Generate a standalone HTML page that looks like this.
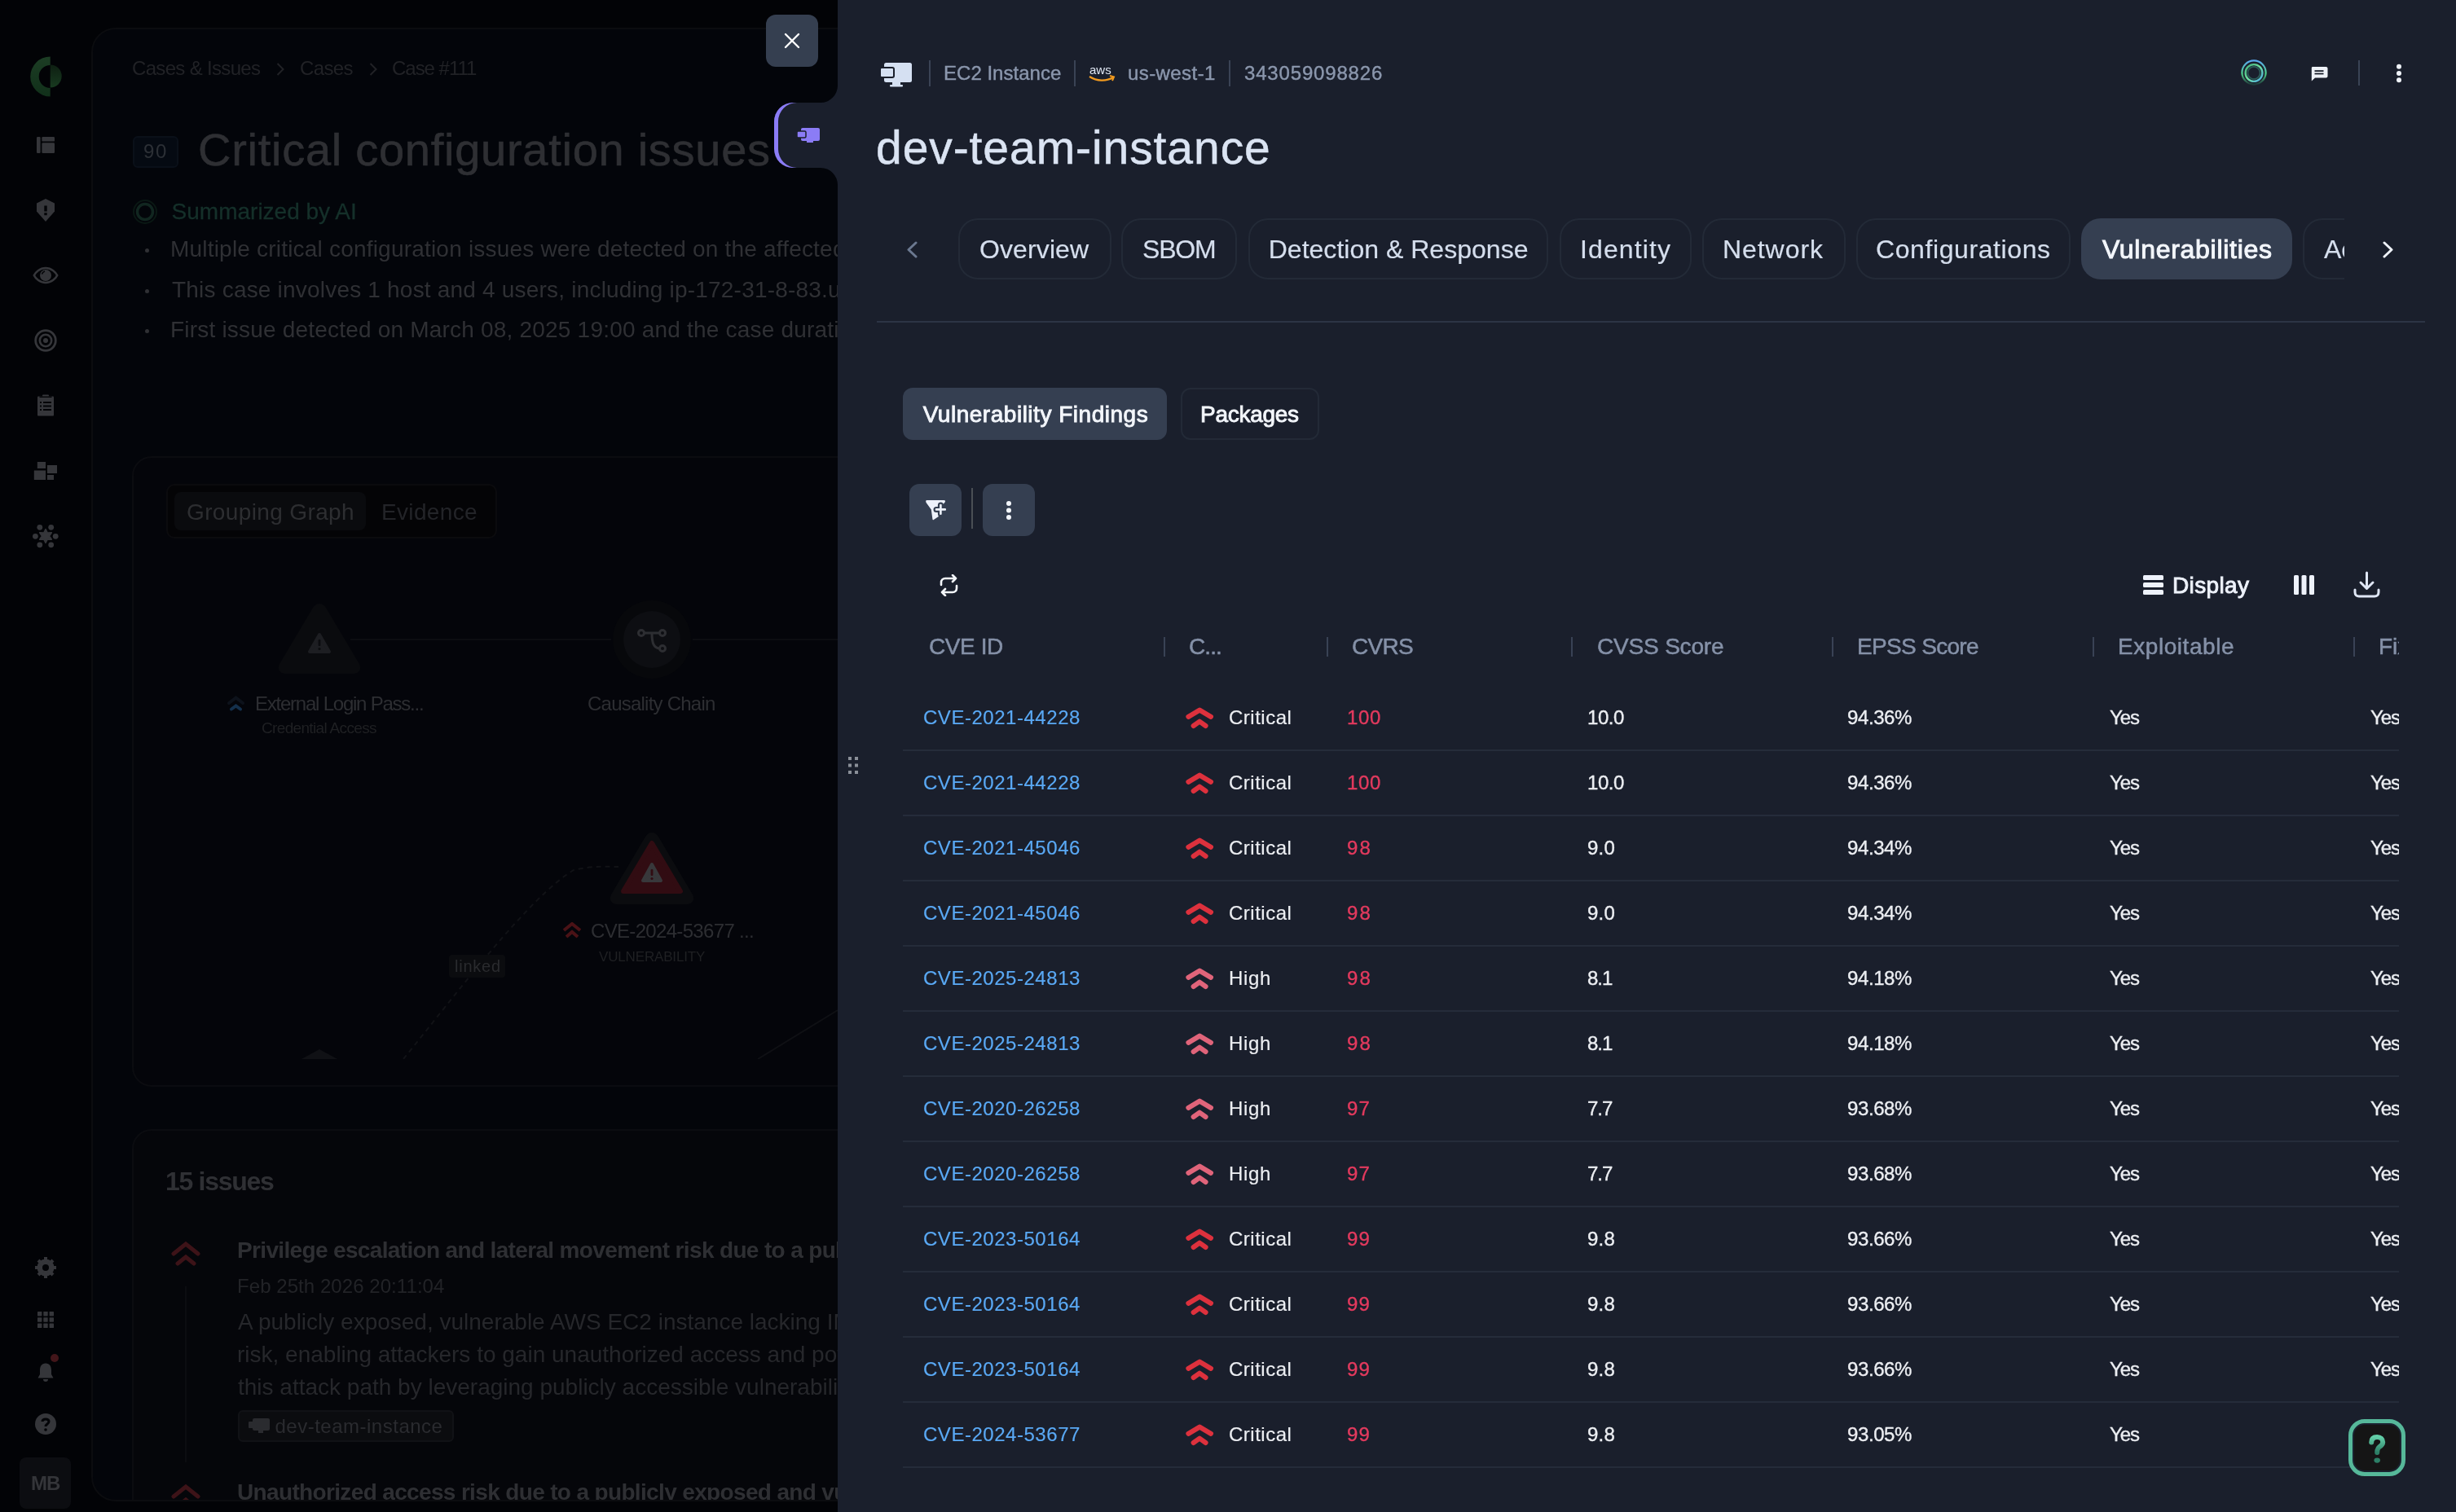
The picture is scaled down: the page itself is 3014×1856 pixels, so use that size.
<!DOCTYPE html><html><head><meta charset="utf-8"><style>
html,body{margin:0;padding:0;}
body{width:3014px;height:1856px;overflow:hidden;position:relative;background:#020306;font-family:"Liberation Sans",sans-serif;}
.a{position:absolute;}
.t{position:absolute;line-height:1;white-space:nowrap;}
#root{position:absolute;left:0;top:0;width:3014px;height:1856px;overflow:hidden;will-change:transform;}
</style></head><body><div id="root">
<div class="a" style="left:112px;top:34px;width:1100px;height:1809px;background:#03050a;border:2px solid #0b0c0f;border-radius:30px;box-sizing:border-box;"></div>
<svg class="a" style="left:30px;top:64px" width="60" height="60" viewBox="0 0 60 60"><defs><linearGradient id="lg1" x1="0" y1="0" x2="0" y2="1"><stop offset="0" stop-color="#1c3d24"/><stop offset="1" stop-color="#11301a"/></linearGradient><linearGradient id="lg2" x1="0" y1="0" x2="0" y2="1"><stop offset="0" stop-color="#0e1f12"/><stop offset="1" stop-color="#183a20"/></linearGradient></defs><path d="M31.7 5.5 A24.5 24.5 0 0 0 31.7 54.5 V44 A14 14 0 0 1 31.7 16 Z" fill="url(#lg1)"/><path d="M31.7 15.5 A14 14 0 0 1 31.7 43.5 Z" fill="url(#lg2)"/></svg>
<svg class="a" style="left:44px;top:167px;" width="24" height="22" viewBox="0 0 24 22"><rect x="1" y="1" width="4.6" height="20" rx="1.2" fill="#35363a"/><rect x="7.4" y="1" width="15.6" height="5.6" rx="1.2" fill="#35363a"/><rect x="7.4" y="8.2" width="15.6" height="12.8" rx="1.2" fill="#35363a"/></svg>
<svg class="a" style="left:44px;top:243px;" width="24" height="30" viewBox="0 0 24 30"><path d="M12 1 L23 6.5 V16.5 L12 29 L1 16.5 V6.5 Z" fill="#35363a"/><rect x="10.3" y="9.5" width="3.4" height="7" fill="#030407"/><rect x="10.3" y="18.2" width="3.4" height="3" fill="#030407"/></svg>
<svg class="a" style="left:40px;top:327px;" width="32" height="22" viewBox="0 0 32 22"><path d="M16 2 C8.5 2 3.5 7.5 1.8 11 C3.5 14.5 8.5 20 16 20 C23.5 20 28.5 14.5 30.2 11 C28.5 7.5 23.5 2 16 2 Z" fill="none" stroke="#35363a" stroke-width="2.6"/><circle cx="16" cy="11" r="7" fill="#35363a"/><path d="M11.5 9.5 A5 5 0 0 1 15 6" fill="none" stroke="#030407" stroke-width="1.6"/></svg>
<svg class="a" style="left:42px;top:404px;" width="28" height="28" viewBox="0 0 28 28"><circle cx="14" cy="14" r="12.3" fill="none" stroke="#35363a" stroke-width="2.8"/><circle cx="14" cy="14" r="7.2" fill="none" stroke="#35363a" stroke-width="2.6"/><circle cx="14" cy="14" r="3" fill="#35363a"/></svg>
<svg class="a" style="left:45px;top:484px;" width="22" height="28" viewBox="0 0 22 28"><rect x="1" y="2.5" width="20" height="24" rx="1" fill="#35363a"/><rect x="7" y="0.5" width="8" height="2.5" rx="1" fill="#35363a"/><rect x="3.5" y="2.6" width="15" height="1.4" fill="#030407"/><g fill="#030407"><rect x="4" y="9" width="2" height="2"/><rect x="4" y="13.5" width="2" height="2"/><rect x="4" y="18" width="2" height="2"/><rect x="8" y="9" width="10" height="2"/><rect x="8" y="13.5" width="10" height="2"/><rect x="8" y="18" width="10" height="2"/></g></svg>
<svg class="a" style="left:41px;top:566px;" width="30" height="24" viewBox="0 0 30 24"><rect x="4.8" y="1" width="10.2" height="8" fill="#35363a"/><rect x="17" y="5" width="12" height="10" fill="#35363a"/><rect x="0.8" y="11.5" width="14.2" height="11.5" fill="#35363a"/><rect x="17" y="17" width="8" height="6" fill="#35363a"/></svg>
<svg class="a" style="left:40px;top:642px;" width="32" height="32" viewBox="0 0 32 32"><path d="M16.00 7.50 L18.25 12.10 L23.36 11.75 L20.50 16.00 L23.36 20.25 L18.25 19.90 L16.00 24.50 L13.75 19.90 L8.64 20.25 L11.50 16.00 L8.64 11.75 L13.75 12.10 Z" fill="#35363a" stroke="#35363a" stroke-width="1.5" stroke-linejoin="round"/><circle cx="8.8" cy="5.3" r="3.4" fill="#35363a"/><circle cx="22.7" cy="5.3" r="3.4" fill="#35363a"/><circle cx="3.4" cy="16.3" r="3.4" fill="#35363a"/><circle cx="28.2" cy="16.3" r="3.4" fill="#35363a"/><circle cx="8.8" cy="26.8" r="3.4" fill="#35363a"/><circle cx="22.7" cy="26.8" r="3.4" fill="#35363a"/></svg>
<svg class="a" style="left:43px;top:1543px;" width="26" height="26" viewBox="0 0 26 26"><circle cx="13" cy="13" r="8" fill="none" stroke="#35363a" stroke-width="5"/><g stroke="#35363a" stroke-width="4"><line x1="13" y1="0" x2="13" y2="26"/><line x1="0" y1="13" x2="26" y2="13"/><line x1="4" y1="4" x2="22" y2="22"/><line x1="22" y1="4" x2="4" y2="22"/></g><circle cx="13" cy="13" r="4" fill="#030407"/></svg>
<svg class="a" style="left:46px;top:1610px;" width="20" height="20" viewBox="0 0 20 20"><rect x="0.0" y="0.0" width="5.4" height="5.4" rx="0.6" fill="#35363a"/><rect x="0.0" y="7.3" width="5.4" height="5.4" rx="0.6" fill="#35363a"/><rect x="0.0" y="14.6" width="5.4" height="5.4" rx="0.6" fill="#35363a"/><rect x="7.3" y="0.0" width="5.4" height="5.4" rx="0.6" fill="#35363a"/><rect x="7.3" y="7.3" width="5.4" height="5.4" rx="0.6" fill="#35363a"/><rect x="7.3" y="14.6" width="5.4" height="5.4" rx="0.6" fill="#35363a"/><rect x="14.6" y="0.0" width="5.4" height="5.4" rx="0.6" fill="#35363a"/><rect x="14.6" y="7.3" width="5.4" height="5.4" rx="0.6" fill="#35363a"/><rect x="14.6" y="14.6" width="5.4" height="5.4" rx="0.6" fill="#35363a"/></svg>
<svg class="a" style="left:45px;top:1672px;" width="22" height="25" viewBox="0 0 22 25"><path d="M11 1.5 C6 1.5 4 5.5 4 10 V15 L1.5 19.5 H20.5 L18 15 V10 C18 5.5 16 1.5 11 1.5 Z" fill="#35363a"/><path d="M8 21 H14 A3 3 0 0 1 8 21 Z" fill="#35363a"/></svg>
<svg class="a" style="left:61px;top:1661px;" width="12" height="12" viewBox="0 0 12 12"><circle cx="6" cy="6" r="5" fill="#43161a"/></svg>
<svg class="a" style="left:43px;top:1735px;" width="26" height="26" viewBox="0 0 26 26"><circle cx="13" cy="13" r="13" fill="#35363a"/><path d="M9 10 C9 6 17 6 17 10 C17 13 13 13 13 16" fill="none" stroke="#030407" stroke-width="3"/><circle cx="13" cy="20" r="1.8" fill="#030407"/></svg>
<div class="a" style="left:24px;top:1789px;width:63px;height:63px;background:#0c0d11;border-radius:8px;"></div>
<div class="t" style="left:38.0px;top:1808.7px;font-size:24px;color:#343539;font-weight:700;letter-spacing:-0.99px;">MB</div>
<div class="a" style="left:114px;top:36px;width:1096px;height:1805px;overflow:hidden;border-radius:28px;">
<div class="t" style="left:48.0px;top:36.2px;font-size:24px;color:#212226;font-weight:400;letter-spacing:-0.67px;">Cases &amp; Issues</div>
<svg class="a" style="left:224px;top:40px;" width="12" height="18" viewBox="0 0 12 18"><path d="M2.5 2 L9.5 9 L2.5 16" fill="none" stroke="#212226" stroke-width="2"/></svg>
<div class="t" style="left:254.0px;top:36.2px;font-size:24px;color:#212226;font-weight:400;letter-spacing:-0.63px;">Cases</div>
<svg class="a" style="left:338px;top:40px;" width="12" height="18" viewBox="0 0 12 18"><path d="M2.5 2 L9.5 9 L2.5 16" fill="none" stroke="#212226" stroke-width="2"/></svg>
<div class="t" style="left:367.0px;top:36.2px;font-size:24px;color:#212226;font-weight:400;letter-spacing:-1.02px;">Case #111</div>
<div class="a" style="left:49px;top:131px;width:56px;height:39px;background:#050a12;border:2px solid #0a1019;border-radius:6px;box-sizing:border-box;"></div>
<div class="t" style="left:62.0px;top:137.7px;font-size:24px;color:#2c3036;font-weight:400;letter-spacing:1.65px;">90</div>
<div class="t" style="left:129.0px;top:120.2px;font-size:56px;color:#2e2f33;font-weight:400;letter-spacing:0.73px;-webkit-text-stroke:0.6px #2e2f33;">Critical configuration issues</div>
<svg class="a" style="left:49px;top:209px;" width="30" height="30" viewBox="0 0 30 30"><circle cx="15" cy="15" r="14" fill="none" stroke="#0a1814" stroke-width="2"/><circle cx="15" cy="15" r="9.5" fill="none" stroke="#112620" stroke-width="3.5"/></svg>
<div class="t" style="left:96.6px;top:210.3px;font-size:28px;color:#15302a;font-weight:400;-webkit-text-stroke:0.3px #15302a;">Summarized by AI</div>
<div class="a" style="left:64px;top:269.0px;width:5px;height:5px;background:#2f3034;border-radius:50%;"></div>
<div class="t" style="left:95.0px;top:256.3px;font-size:28px;color:#2f3034;font-weight:400;letter-spacing:0.2px;">Multiple critical configuration issues were detected on the affected host</div>
<div class="a" style="left:64px;top:318.5px;width:5px;height:5px;background:#2f3034;border-radius:50%;"></div>
<div class="t" style="left:97.0px;top:305.8px;font-size:28px;color:#2f3034;font-weight:400;letter-spacing:0.2px;">This case involves 1 host and 4 users, including ip-172-31-8-83.us-west-1</div>
<div class="a" style="left:64px;top:368.0px;width:5px;height:5px;background:#2f3034;border-radius:50%;"></div>
<div class="t" style="left:95.0px;top:355.3px;font-size:28px;color:#2f3034;font-weight:400;letter-spacing:0.2px;">First issue detected on March 08, 2025 19:00 and the case duration</div>
<div class="a" style="left:48px;top:524px;width:900px;height:774px;background:#04050a;border:2px solid #0b0c10;border-radius:24px;box-sizing:border-box;"></div>
<div class="a" style="left:90px;top:558px;width:406px;height:67px;background:#040406;border:2px solid #0b0b0e;border-radius:10px;box-sizing:border-box;"></div>
<div class="a" style="left:100px;top:568px;width:235px;height:47px;background:#0a0b0e;border-radius:8px;"></div>
<div class="t" style="left:115.0px;top:579.3px;font-size:28px;color:#2d2e31;font-weight:400;letter-spacing:0.37px;">Grouping Graph</div>
<div class="t" style="left:354.0px;top:579.3px;font-size:28px;color:#232428;font-weight:400;letter-spacing:0.34px;">Evidence</div>
<div class="a" style="left:51px;top:644px;width:900px;height:620px;overflow:hidden;">
<svg class="a" style="left:-165px;top:-680px" width="1100" height="1856"><line x1="430" y1="785" x2="750" y2="785" stroke="#0c0d11" stroke-width="2"/><line x1="850" y1="785" x2="1028" y2="785" stroke="#0c0d11" stroke-width="2"/><path d="M495 1300 C560 1220 650 1100 704 1068 C730 1062 745 1064 759 1064" fill="none" stroke="#111216" stroke-width="2" stroke-dasharray="6 5"/><line x1="930" y1="1300" x2="1028" y2="1240" stroke="#0f1014" stroke-width="2"/><path d="M370 1300 L392 1288 L414 1300 Z" fill="#101115"/></svg>
<svg class="a" style="left:175px;top:58px;" width="104" height="90" viewBox="0 0 104 90"><path d="M52 3 C56 3 58 5 60 8 L101 77 C104 83 101 89 94 89 H10 C3 89 0 83 3 77 L44 8 C46 5 48 3 52 3 Z" fill="#0a0b0e"/><path d="M52 41 L64 62 H40 Z" fill="#1d1e22" stroke="#1d1e22" stroke-width="4" stroke-linejoin="round"/><rect x="50.6" y="47" width="2.8" height="8" rx="1" fill="#0b0c0f"/><circle cx="52" cy="58.5" r="1.6" fill="#0b0c0f"/></svg>
<svg class="a" style="left:113px;top:173px;" width="23" height="22" viewBox="0 0 23 22"><path d="M3 10 L11.5 3.5 L20 10" fill="none" stroke="#0d121b" stroke-width="4" stroke-linecap="round"/><path d="M6 17.5 L11.5 13.5 L17 17.5" fill="none" stroke="#14304c" stroke-width="4" stroke-linecap="round"/></svg>
<div class="t" style="left:148.0px;top:171.7px;font-size:24px;color:#2d2e32;font-weight:400;letter-spacing:-1.23px;">External Login Pass...</div>
<div class="t" style="left:156.0px;top:203.9px;font-size:19px;color:#1f2023;font-weight:400;letter-spacing:-0.66px;">Credential Access</div>
<svg class="a" style="left:587px;top:57px;" width="96" height="96" viewBox="0 0 96 96"><circle cx="48" cy="48" r="48" fill="#07080b"/><circle cx="48" cy="48" r="35" fill="#0d0e12"/><g fill="none" stroke="#2d2e32" stroke-width="3"><circle cx="35" cy="40" r="3.5"/><circle cx="61" cy="40" r="3.5"/><circle cx="61" cy="59" r="3.5"/><path d="M39 40 H57"/><path d="M48 40 C48 52 50 58 57 59"/></g></svg>
<div class="t" style="left:556.0px;top:171.7px;font-size:24px;color:#2d2e32;font-weight:400;letter-spacing:-0.77px;">Causality Chain</div>
<svg class="a" style="left:583px;top:340px;" width="104" height="92" viewBox="0 0 104 92"><path d="M52 2 C56 2 58 4 60 7 L102 78 C105 84 102 90 95 90 H9 C2 90 -1 84 2 78 L44 7 C46 4 48 2 52 2 Z" fill="#0b0c0f"/><path d="M52 15 L87 74 H17 Z" fill="#310c12" stroke="#310c12" stroke-width="6" stroke-linejoin="round"/><path d="M52 41 L63 61 H41 Z" fill="#38383b" stroke="#38383b" stroke-width="4" stroke-linejoin="round"/><rect x="50.6" y="47" width="2.8" height="8" rx="1" fill="#310c12"/><circle cx="52" cy="58.5" r="1.6" fill="#310c12"/></svg>
<svg class="a" style="left:525px;top:452px;" width="24" height="20" viewBox="0 0 24 20"><path d="M2 10 L12 2 L22 10" fill="none" stroke="#4a1216" stroke-width="4"/><path d="M5 18 L12 12 L19 18" fill="none" stroke="#4a1216" stroke-width="4"/></svg>
<div class="t" style="left:560.0px;top:450.7px;font-size:24px;color:#2d2e32;font-weight:400;letter-spacing:-0.67px;">CVE-2024-53677 ...</div>
<div class="t" style="left:570.0px;top:485.6px;font-size:17px;color:#1f2023;font-weight:400;letter-spacing:-0.16px;">VULNERABILITY</div>
<div class="a" style="left:386px;top:492px;width:69px;height:28px;background:#0b0c0f;border-radius:4px;"></div>
<div class="t" style="left:393.0px;top:496.1px;font-size:20px;color:#2a2b2e;font-weight:400;letter-spacing:0.77px;">linked</div>
</div>
<div class="a" style="left:48px;top:1350px;width:900px;height:600px;background:#05060a;border:2px solid #0b0c10;border-radius:24px;box-sizing:border-box;"></div>
<div class="t" style="left:89.0px;top:1398.4px;font-size:32px;color:#2f3034;font-weight:700;letter-spacing:-1.29px;">15 issues</div>
<svg class="a" style="left:96px;top:1488px;" width="36" height="30" viewBox="0 0 36 30"><path d="M3 15 L18 3 L33 15" fill="none" stroke="#3d1318" stroke-width="5" stroke-linecap="round"/><path d="M8 27 L18 19 L28 27" fill="none" stroke="#3d1318" stroke-width="5" stroke-linecap="round"/></svg>
<div class="a" style="left:113px;top:1543px;width:2px;height:216px;background:#0c0d11;"></div>
<div class="t" style="left:177.0px;top:1485.3px;font-size:28px;color:#2e2f33;font-weight:700;letter-spacing:-0.65px;">Privilege escalation and lateral movement risk due to a publicly exposed</div>
<div class="t" style="left:177.0px;top:1530.7px;font-size:24px;color:#222327;font-weight:400;letter-spacing:0.06px;">Feb 25th 2026 20:11:04</div>
<div class="t" style="left:178.0px;top:1573.3px;font-size:28px;color:#26272b;font-weight:400;">A publicly exposed, vulnerable AWS EC2 instance lacking IMDSv2 poses a</div>
<div class="t" style="left:177.0px;top:1613.3px;font-size:28px;color:#26272b;font-weight:400;">risk, enabling attackers to gain unauthorized access and potentially</div>
<div class="t" style="left:178.0px;top:1653.3px;font-size:28px;color:#26272b;font-weight:400;">this attack path by leveraging publicly accessible vulnerabilities</div>
<div class="a" style="left:178px;top:1695px;width:265px;height:39px;background:#0b0c0f;border:2px solid #111216;border-radius:6px;box-sizing:border-box;"></div>
<svg class="a" style="left:191px;top:1705px;" width="26" height="20" viewBox="0 0 26 20"><rect x="5" y="0" width="21" height="15" rx="2" fill="#2a2b2f"/><rect x="0" y="4" width="10" height="8" rx="1" fill="#2a2b2f"/><rect x="12" y="15" width="6" height="3" fill="#2a2b2f"/></svg>
<div class="t" style="left:223.5px;top:1702.7px;font-size:24px;color:#2a2b2f;font-weight:400;letter-spacing:0.50px;">dev-team-instance</div>
<svg class="a" style="left:96px;top:1786px;" width="36" height="30" viewBox="0 0 36 30"><path d="M3 15 L18 3 L33 15" fill="none" stroke="#3d1318" stroke-width="5" stroke-linecap="round"/><path d="M8 27 L18 19 L28 27" fill="none" stroke="#3d1318" stroke-width="5" stroke-linecap="round"/></svg>
<div class="t" style="left:177.0px;top:1782.3px;font-size:28px;color:#2e2f33;font-weight:700;letter-spacing:-0.65px;">Unauthorized access risk due to a publicly exposed and vulnerable</div>
</div>
<div class="a" style="left:940px;top:18px;width:64px;height:64px;background:#353f50;border-radius:12px;"></div>
<svg class="a" style="left:960px;top:38px;" width="24" height="24" viewBox="0 0 24 24"><path d="M4 4 L20 20 M20 4 L4 20" stroke="#ffffff" stroke-width="2.4" stroke-linecap="round"/></svg>
<div class="a" style="left:1028px;top:0px;width:1986px;height:1856px;background:#1a1f2c;"></div>
<div class="a" style="left:950px;top:126px;width:100px;height:80px;background:#1a1f2c;border-radius:23px 0 0 23px;box-shadow:inset 5px 0 0 #8b7cf6;"></div>
<svg class="a" style="left:1007px;top:105px" width="21" height="21"><path d="M21 0 V21 H0 A21 21 0 0 0 21 0 Z" fill="#1a1f2c"/></svg>
<svg class="a" style="left:1007px;top:206px" width="21" height="21"><path d="M21 21 V0 H0 A21 21 0 0 1 21 21 Z" fill="#1a1f2c"/></svg>
<svg class="a" style="left:978px;top:157px;" width="28" height="20" viewBox="0 0 28 20"><rect x="5" y="0" width="23" height="16" rx="2" fill="#8b7cf6"/><rect x="0" y="4" width="11" height="8" rx="1.5" fill="#8b7cf6" stroke="#1a1f2b" stroke-width="1.5"/><rect x="12" y="16" width="8" height="2" fill="#8b7cf6"/></svg>
<svg class="a" style="left:1080px;top:77px;" width="40" height="30" viewBox="0 0 40 30"><rect x="5" y="0" width="34" height="24" rx="2.5" fill="#d5e0f2"/><rect x="0" y="6" width="17" height="12" rx="2" fill="#d5e0f2" stroke="#1a1f2b" stroke-width="2"/><rect x="15" y="24" width="10" height="3" fill="#d5e0f2"/><rect x="12" y="27" width="16" height="2.5" rx="1" fill="#d5e0f2"/></svg>
<div class="a" style="left:1140px;top:74px;width:2px;height:32px;background:#3a4355;"></div>
<div class="t" style="left:1158.0px;top:78.2px;font-size:24px;color:#8b97ad;font-weight:400;letter-spacing:0.02px;-webkit-text-stroke:0.4px #8b97ad;">EC2 Instance</div>
<div class="a" style="left:1318px;top:74px;width:2px;height:32px;background:#3a4355;"></div>
<svg class="a" style="left:1336px;top:78px;" width="33" height="25" viewBox="0 0 33 25"><text x="1" y="13" font-family="Liberation Sans" font-size="15" fill="#dfe6f2">aws</text><path d="M1 16 C10 22 22 22 30 17" fill="none" stroke="#f29a1e" stroke-width="2.2"/><path d="M26 15 L31 16.5 L29 21" fill="none" stroke="#f29a1e" stroke-width="2"/></svg>
<div class="t" style="left:1384.0px;top:78.2px;font-size:24px;color:#8b97ad;font-weight:400;letter-spacing:0.42px;-webkit-text-stroke:0.4px #8b97ad;">us-west-1</div>
<div class="a" style="left:1508px;top:74px;width:2px;height:32px;background:#3a4355;"></div>
<div class="t" style="left:1527.0px;top:78.2px;font-size:24px;color:#8b97ad;font-weight:400;letter-spacing:0.83px;-webkit-text-stroke:0.4px #8b97ad;">343059098826</div>
<svg class="a" style="left:2746px;top:69px;" width="40" height="40" viewBox="0 0 40 40"><defs><linearGradient id="ai1" x1="0.5" y1="0" x2="0.5" y2="1"><stop offset="0" stop-color="#5aa8f0"/><stop offset="0.55" stop-color="#4fd08a"/><stop offset="1" stop-color="#1f3a3a"/></linearGradient><linearGradient id="ai2" x1="0" y1="0" x2="1" y2="1"><stop offset="0" stop-color="#3fae7a"/><stop offset="0.5" stop-color="#6ee0a0"/><stop offset="1" stop-color="#4aa8e8"/></linearGradient></defs><circle cx="20" cy="20" r="14.6" fill="none" stroke="url(#ai1)" stroke-width="2.2"/><circle cx="20" cy="20.5" r="10.4" fill="none" stroke="url(#ai2)" stroke-width="2.4"/><circle cx="20" cy="20.5" r="7.6" fill="none" stroke="#2f6a63" stroke-width="1.8" opacity="0.8"/></svg>
<svg class="a" style="left:2835px;top:81px;" width="22" height="20" viewBox="0 0 22 20"><path d="M3 1 H19.5 C20.6 1 21.5 1.9 21.5 3 V12.5 C21.5 13.6 20.6 14.5 19.5 14.5 H6 L1.8 18.5 V3 C1.8 1.9 2 1 3 1 Z" fill="#eef2f8"/><rect x="5.5" y="5.2" width="11" height="1.8" fill="#1a1f2b"/><rect x="5.5" y="8.6" width="11" height="1.8" fill="#1a1f2b"/></svg>
<div class="a" style="left:2894px;top:74px;width:2px;height:31px;background:#3a4355;"></div>
<svg class="a" style="left:2939px;top:78px;" width="10" height="24" viewBox="0 0 10 24"><circle cx="5" cy="3.8" r="3" fill="#eef2f8"/><circle cx="5" cy="12" r="3" fill="#eef2f8"/><circle cx="5" cy="20.2" r="3" fill="#eef2f8"/></svg>
<div class="t" style="left:1075.0px;top:153.0px;font-size:57px;color:#dbe4f3;font-weight:400;letter-spacing:0.93px;-webkit-text-stroke:0.5px #dbe4f3;">dev-team-instance</div>
<svg class="a" style="left:1112px;top:296px;" width="16" height="21" viewBox="0 0 16 21"><path d="M12 2 L3 10.5 L12 19" fill="none" stroke="#6b7890" stroke-width="3" stroke-linecap="round" stroke-linejoin="round"/></svg>
<svg class="a" style="left:2922px;top:296px;" width="16" height="21" viewBox="0 0 16 21"><path d="M4 2 L13 10.5 L4 19" fill="none" stroke="#eef2f8" stroke-width="3" stroke-linecap="round" stroke-linejoin="round"/></svg>
<div class="a" style="left:1150px;top:260px;width:1727px;height:95px;overflow:hidden;">
<div class="a" style="left:26px;top:8px;width:188px;height:75px;border-radius:24px;box-sizing:border-box;border:2px solid #232a37;"></div>
<div class="t" style="left:52.0px;top:29.9px;font-size:32px;color:#d5deed;font-weight:400;letter-spacing:0.11px;-webkit-text-stroke:0.2px #d5deed;">Overview</div>
<div class="a" style="left:226px;top:8px;width:142px;height:75px;border-radius:24px;box-sizing:border-box;border:2px solid #232a37;"></div>
<div class="t" style="left:252.0px;top:29.9px;font-size:32px;color:#d5deed;font-weight:400;letter-spacing:-1.19px;-webkit-text-stroke:0.2px #d5deed;">SBOM</div>
<div class="a" style="left:382px;top:8px;width:368px;height:75px;border-radius:24px;box-sizing:border-box;border:2px solid #232a37;"></div>
<div class="t" style="left:406.7px;top:29.9px;font-size:32px;color:#d5deed;font-weight:400;letter-spacing:0.02px;-webkit-text-stroke:0.2px #d5deed;">Detection &amp; Response</div>
<div class="a" style="left:764px;top:8px;width:162px;height:75px;border-radius:24px;box-sizing:border-box;border:2px solid #232a37;"></div>
<div class="t" style="left:789.0px;top:29.9px;font-size:32px;color:#d5deed;font-weight:400;letter-spacing:1.12px;-webkit-text-stroke:0.2px #d5deed;">Identity</div>
<div class="a" style="left:939px;top:8px;width:176px;height:75px;border-radius:24px;box-sizing:border-box;border:2px solid #232a37;"></div>
<div class="t" style="left:964.0px;top:29.9px;font-size:32px;color:#d5deed;font-weight:400;letter-spacing:0.94px;-webkit-text-stroke:0.2px #d5deed;">Network</div>
<div class="a" style="left:1128px;top:8px;width:263px;height:75px;border-radius:24px;box-sizing:border-box;border:2px solid #232a37;"></div>
<div class="t" style="left:1152.0px;top:29.9px;font-size:32px;color:#d5deed;font-weight:400;letter-spacing:0.59px;-webkit-text-stroke:0.2px #d5deed;">Configurations</div>
<div class="a" style="left:1404px;top:8px;width:259px;height:75px;border-radius:24px;box-sizing:border-box;background:#353f51;"></div>
<div class="t" style="left:1430.0px;top:29.9px;font-size:32px;color:#f3f6fb;font-weight:400;letter-spacing:0.71px;-webkit-text-stroke:1px #f3f6fb;">Vulnerabilities</div>
<div class="a" style="left:1676px;top:8px;width:174px;height:75px;border-radius:24px;box-sizing:border-box;border:2px solid #232a37;"></div>
<div class="t" style="left:1702.0px;top:29.9px;font-size:32px;color:#d5deed;font-weight:400;-webkit-text-stroke:0.2px #d5deed;">Actions</div>
</div>
<div class="a" style="left:1076px;top:394px;width:1900px;height:2px;background:#2c3445;"></div>
<div class="a" style="left:1108px;top:476px;width:324px;height:64px;background:#353f51;border-radius:12px;"></div>
<div class="t" style="left:1132.7px;top:495.3px;font-size:28px;color:#f3f6fb;font-weight:400;letter-spacing:0.52px;-webkit-text-stroke:0.9px #f3f6fb;">Vulnerability Findings</div>
<div class="a" style="left:1449px;top:476px;width:170px;height:64px;border:2px solid #232a37;border-radius:12px;box-sizing:border-box;"></div>
<div class="t" style="left:1473.0px;top:495.3px;font-size:28px;color:#f3f6fb;font-weight:400;letter-spacing:-0.28px;-webkit-text-stroke:0.9px #f3f6fb;">Packages</div>
<div class="a" style="left:1116px;top:594px;width:64px;height:64px;background:#353f51;border-radius:12px;"></div>
<svg class="a" style="left:1134px;top:612px;" width="28" height="28" viewBox="0 0 28 28"><path d="M3.5 2 H24.5 Q26.5 2 25.8 4.2 L17.8 13.5 V22 L11.8 26 Q10.6 26.6 10.4 25.2 L8.8 13.6 L2.6 5 Q1.4 2 3.5 2 Z" fill="#eef2fb"/><path d="M20.4 8 V18.8 M15 13.4 H25.8" stroke="#353f51" stroke-width="7" stroke-linecap="round"/><path d="M20.4 8 V18.8 M15 13.4 H25.8" stroke="#eef2fb" stroke-width="2.6" stroke-linecap="round"/></svg>
<div class="a" style="left:1192px;top:599px;width:2px;height:50px;background:#4a4f55;"></div>
<div class="a" style="left:1206px;top:594px;width:64px;height:64px;background:#353f51;border-radius:12px;"></div>
<svg class="a" style="left:1233px;top:615px;" width="10" height="23" viewBox="0 0 10 23"><circle cx="5" cy="3" r="3" fill="#f3f6fb"/><circle cx="5" cy="11.5" r="3" fill="#f3f6fb"/><circle cx="5" cy="20" r="3" fill="#f3f6fb"/></svg>
<svg class="a" style="left:1151px;top:705px;" width="27" height="27" viewBox="0 0 27 27"><path d="M4 13 V10 C4 7 6 5 9 5 H22 M18 1 L22 5 L18 9" fill="none" stroke="#f3f6fb" stroke-width="2.6" stroke-linecap="round" stroke-linejoin="round"/><path d="M23 14 V17 C23 20 21 22 18 22 H5 M9 18 L5 22 L9 26" fill="none" stroke="#f3f6fb" stroke-width="2.6" stroke-linecap="round" stroke-linejoin="round"/></svg>
<svg class="a" style="left:2630px;top:706px;" width="25" height="24" viewBox="0 0 25 24"><rect x="0" y="0" width="25" height="6" rx="1.5" fill="#eef2fb"/><rect x="0" y="9" width="25" height="6" rx="1.5" fill="#eef2fb"/><rect x="0" y="18" width="25" height="6" rx="1.5" fill="#eef2fb"/></svg>
<div class="t" style="left:2666.0px;top:705.3px;font-size:28px;color:#eef2fb;font-weight:400;letter-spacing:0.37px;-webkit-text-stroke:0.9px #eef2fb;">Display</div>
<svg class="a" style="left:2815px;top:706px;" width="25" height="24" viewBox="0 0 25 24"><rect x="0" y="0" width="6" height="24" rx="1.5" fill="#eef2fb"/><rect x="9.5" y="0" width="6" height="24" rx="1.5" fill="#eef2fb"/><rect x="19" y="0" width="6" height="24" rx="1.5" fill="#eef2fb"/></svg>
<svg class="a" style="left:2888px;top:701px;" width="33" height="33" viewBox="0 0 33 33"><path d="M16.5 2 V21 M9 14 L16.5 21.5 L24 14" fill="none" stroke="#dfe6f5" stroke-width="3" stroke-linecap="round" stroke-linejoin="round"/><path d="M2 23 V26 C2 29 4 31 7 31 H26 C29 31 31 29 31 26 V23" fill="none" stroke="#dfe6f5" stroke-width="3" stroke-linecap="round"/></svg>
<div class="a" style="left:1100px;top:760px;width:1844px;height:1096px;overflow:hidden;">
<div class="t" style="left:40.0px;top:20.3px;font-size:28px;color:#8591a8;font-weight:400;letter-spacing:-0.43px;-webkit-text-stroke:0.5px #8591a8;">CVE ID</div>
<div class="t" style="left:359.0px;top:20.3px;font-size:28px;color:#8591a8;font-weight:400;letter-spacing:-0.93px;-webkit-text-stroke:0.5px #8591a8;">C...</div>
<div class="t" style="left:559.0px;top:20.3px;font-size:28px;color:#8591a8;font-weight:400;letter-spacing:-0.71px;-webkit-text-stroke:0.5px #8591a8;">CVRS</div>
<div class="t" style="left:860.0px;top:20.3px;font-size:28px;color:#8591a8;font-weight:400;letter-spacing:-0.18px;-webkit-text-stroke:0.5px #8591a8;">CVSS Score</div>
<div class="t" style="left:1179.0px;top:20.3px;font-size:28px;color:#8591a8;font-weight:400;letter-spacing:-0.67px;-webkit-text-stroke:0.5px #8591a8;">EPSS Score</div>
<div class="t" style="left:1499.0px;top:20.3px;font-size:28px;color:#8591a8;font-weight:400;letter-spacing:0.56px;-webkit-text-stroke:0.5px #8591a8;">Exploitable</div>
<div class="t" style="left:1819.0px;top:20.3px;font-size:28px;color:#8591a8;font-weight:400;-webkit-text-stroke:0.5px #8591a8;">Fix Available</div>
<div class="a" style="left:328px;top:22px;width:2px;height:24px;background:#394255;"></div>
<div class="a" style="left:528px;top:22px;width:2px;height:24px;background:#394255;"></div>
<div class="a" style="left:828px;top:22px;width:2px;height:24px;background:#394255;"></div>
<div class="a" style="left:1148px;top:22px;width:2px;height:24px;background:#394255;"></div>
<div class="a" style="left:1468px;top:22px;width:2px;height:24px;background:#394255;"></div>
<div class="a" style="left:1788px;top:22px;width:2px;height:24px;background:#394255;"></div>
<div class="t" style="left:33.0px;top:108.7px;font-size:24px;color:#5aa9f5;font-weight:400;letter-spacing:0.53px;-webkit-text-stroke:0.15px #5aa9f5;">CVE-2021-44228</div>
<svg class="a" style="left:345px;top:100px;" width="55" height="40" viewBox="0 0 55 40"><path d="M13.4 19.8 L27.2 11.6 L41 19.8" fill="none" stroke="#dd313d" stroke-width="6" stroke-linecap="round" stroke-linejoin="round"/><path d="M19.6 31 L27.1 25.6 L34.6 31" fill="none" stroke="#dd313d" stroke-width="6" stroke-linecap="round" stroke-linejoin="round"/></svg>
<div class="t" style="left:408.0px;top:108.7px;font-size:24px;color:#eceef2;font-weight:400;letter-spacing:0.51px;-webkit-text-stroke:0.15px #eceef2;">Critical</div>
<div class="t" style="left:553.0px;top:108.7px;font-size:24px;color:#e33a5e;font-weight:400;letter-spacing:0.65px;-webkit-text-stroke:0.35px #e33a5e;">100</div>
<div class="t" style="left:848.0px;top:108.7px;font-size:24px;color:#eceef2;font-weight:400;letter-spacing:-0.45px;-webkit-text-stroke:0.35px #eceef2;">10.0</div>
<div class="t" style="left:1167.0px;top:108.7px;font-size:24px;color:#eceef2;font-weight:400;letter-spacing:-0.41px;-webkit-text-stroke:0.35px #eceef2;">94.36%</div>
<div class="t" style="left:1489.0px;top:108.7px;font-size:24px;color:#eceef2;font-weight:400;letter-spacing:-1.08px;-webkit-text-stroke:0.35px #eceef2;">Yes</div>
<div class="t" style="left:1809.0px;top:108.7px;font-size:24px;color:#eceef2;font-weight:400;letter-spacing:-1.08px;-webkit-text-stroke:0.35px #eceef2;">Yes</div>
<div class="a" style="left:8px;top:160px;width:1836px;height:2px;background:#252c3a;"></div>
<div class="t" style="left:33.0px;top:188.7px;font-size:24px;color:#5aa9f5;font-weight:400;letter-spacing:0.53px;-webkit-text-stroke:0.15px #5aa9f5;">CVE-2021-44228</div>
<svg class="a" style="left:345px;top:180px;" width="55" height="40" viewBox="0 0 55 40"><path d="M13.4 19.8 L27.2 11.6 L41 19.8" fill="none" stroke="#dd313d" stroke-width="6" stroke-linecap="round" stroke-linejoin="round"/><path d="M19.6 31 L27.1 25.6 L34.6 31" fill="none" stroke="#dd313d" stroke-width="6" stroke-linecap="round" stroke-linejoin="round"/></svg>
<div class="t" style="left:408.0px;top:188.7px;font-size:24px;color:#eceef2;font-weight:400;letter-spacing:0.51px;-webkit-text-stroke:0.15px #eceef2;">Critical</div>
<div class="t" style="left:553.0px;top:188.7px;font-size:24px;color:#e33a5e;font-weight:400;letter-spacing:0.65px;-webkit-text-stroke:0.35px #e33a5e;">100</div>
<div class="t" style="left:848.0px;top:188.7px;font-size:24px;color:#eceef2;font-weight:400;letter-spacing:-0.45px;-webkit-text-stroke:0.35px #eceef2;">10.0</div>
<div class="t" style="left:1167.0px;top:188.7px;font-size:24px;color:#eceef2;font-weight:400;letter-spacing:-0.41px;-webkit-text-stroke:0.35px #eceef2;">94.36%</div>
<div class="t" style="left:1489.0px;top:188.7px;font-size:24px;color:#eceef2;font-weight:400;letter-spacing:-1.08px;-webkit-text-stroke:0.35px #eceef2;">Yes</div>
<div class="t" style="left:1809.0px;top:188.7px;font-size:24px;color:#eceef2;font-weight:400;letter-spacing:-1.08px;-webkit-text-stroke:0.35px #eceef2;">Yes</div>
<div class="a" style="left:8px;top:240px;width:1836px;height:2px;background:#252c3a;"></div>
<div class="t" style="left:33.0px;top:268.7px;font-size:24px;color:#5aa9f5;font-weight:400;letter-spacing:0.53px;-webkit-text-stroke:0.15px #5aa9f5;">CVE-2021-45046</div>
<svg class="a" style="left:345px;top:260px;" width="55" height="40" viewBox="0 0 55 40"><path d="M13.4 19.8 L27.2 11.6 L41 19.8" fill="none" stroke="#dd313d" stroke-width="6" stroke-linecap="round" stroke-linejoin="round"/><path d="M19.6 31 L27.1 25.6 L34.6 31" fill="none" stroke="#dd313d" stroke-width="6" stroke-linecap="round" stroke-linejoin="round"/></svg>
<div class="t" style="left:408.0px;top:268.7px;font-size:24px;color:#eceef2;font-weight:400;letter-spacing:0.51px;-webkit-text-stroke:0.15px #eceef2;">Critical</div>
<div class="t" style="left:553.0px;top:268.7px;font-size:24px;color:#e33a5e;font-weight:400;letter-spacing:2.15px;-webkit-text-stroke:0.35px #e33a5e;">98</div>
<div class="t" style="left:848.0px;top:268.7px;font-size:24px;color:#eceef2;font-weight:400;letter-spacing:0.24px;-webkit-text-stroke:0.35px #eceef2;">9.0</div>
<div class="t" style="left:1167.0px;top:268.7px;font-size:24px;color:#eceef2;font-weight:400;letter-spacing:-0.41px;-webkit-text-stroke:0.35px #eceef2;">94.34%</div>
<div class="t" style="left:1489.0px;top:268.7px;font-size:24px;color:#eceef2;font-weight:400;letter-spacing:-1.08px;-webkit-text-stroke:0.35px #eceef2;">Yes</div>
<div class="t" style="left:1809.0px;top:268.7px;font-size:24px;color:#eceef2;font-weight:400;letter-spacing:-1.08px;-webkit-text-stroke:0.35px #eceef2;">Yes</div>
<div class="a" style="left:8px;top:320px;width:1836px;height:2px;background:#252c3a;"></div>
<div class="t" style="left:33.0px;top:348.7px;font-size:24px;color:#5aa9f5;font-weight:400;letter-spacing:0.53px;-webkit-text-stroke:0.15px #5aa9f5;">CVE-2021-45046</div>
<svg class="a" style="left:345px;top:340px;" width="55" height="40" viewBox="0 0 55 40"><path d="M13.4 19.8 L27.2 11.6 L41 19.8" fill="none" stroke="#dd313d" stroke-width="6" stroke-linecap="round" stroke-linejoin="round"/><path d="M19.6 31 L27.1 25.6 L34.6 31" fill="none" stroke="#dd313d" stroke-width="6" stroke-linecap="round" stroke-linejoin="round"/></svg>
<div class="t" style="left:408.0px;top:348.7px;font-size:24px;color:#eceef2;font-weight:400;letter-spacing:0.51px;-webkit-text-stroke:0.15px #eceef2;">Critical</div>
<div class="t" style="left:553.0px;top:348.7px;font-size:24px;color:#e33a5e;font-weight:400;letter-spacing:2.15px;-webkit-text-stroke:0.35px #e33a5e;">98</div>
<div class="t" style="left:848.0px;top:348.7px;font-size:24px;color:#eceef2;font-weight:400;letter-spacing:0.24px;-webkit-text-stroke:0.35px #eceef2;">9.0</div>
<div class="t" style="left:1167.0px;top:348.7px;font-size:24px;color:#eceef2;font-weight:400;letter-spacing:-0.41px;-webkit-text-stroke:0.35px #eceef2;">94.34%</div>
<div class="t" style="left:1489.0px;top:348.7px;font-size:24px;color:#eceef2;font-weight:400;letter-spacing:-1.08px;-webkit-text-stroke:0.35px #eceef2;">Yes</div>
<div class="t" style="left:1809.0px;top:348.7px;font-size:24px;color:#eceef2;font-weight:400;letter-spacing:-1.08px;-webkit-text-stroke:0.35px #eceef2;">Yes</div>
<div class="a" style="left:8px;top:400px;width:1836px;height:2px;background:#252c3a;"></div>
<div class="t" style="left:33.0px;top:428.7px;font-size:24px;color:#5aa9f5;font-weight:400;letter-spacing:0.53px;-webkit-text-stroke:0.15px #5aa9f5;">CVE-2025-24813</div>
<svg class="a" style="left:345px;top:420px;" width="55" height="40" viewBox="0 0 55 40"><path d="M13.4 19.8 L27.2 11.6 L41 19.8" fill="none" stroke="#e0647a" stroke-width="6" stroke-linecap="round" stroke-linejoin="round"/><path d="M19.6 31 L27.1 25.6 L34.6 31" fill="none" stroke="#e0647a" stroke-width="6" stroke-linecap="round" stroke-linejoin="round"/></svg>
<div class="t" style="left:408.0px;top:428.7px;font-size:24px;color:#eceef2;font-weight:400;letter-spacing:0.66px;-webkit-text-stroke:0.15px #eceef2;">High</div>
<div class="t" style="left:553.0px;top:428.7px;font-size:24px;color:#e33a5e;font-weight:400;letter-spacing:2.15px;-webkit-text-stroke:0.35px #e33a5e;">98</div>
<div class="t" style="left:848.0px;top:428.7px;font-size:24px;color:#eceef2;font-weight:400;letter-spacing:-1.01px;-webkit-text-stroke:0.35px #eceef2;">8.1</div>
<div class="t" style="left:1167.0px;top:428.7px;font-size:24px;color:#eceef2;font-weight:400;letter-spacing:-0.41px;-webkit-text-stroke:0.35px #eceef2;">94.18%</div>
<div class="t" style="left:1489.0px;top:428.7px;font-size:24px;color:#eceef2;font-weight:400;letter-spacing:-1.08px;-webkit-text-stroke:0.35px #eceef2;">Yes</div>
<div class="t" style="left:1809.0px;top:428.7px;font-size:24px;color:#eceef2;font-weight:400;letter-spacing:-1.08px;-webkit-text-stroke:0.35px #eceef2;">Yes</div>
<div class="a" style="left:8px;top:480px;width:1836px;height:2px;background:#252c3a;"></div>
<div class="t" style="left:33.0px;top:508.7px;font-size:24px;color:#5aa9f5;font-weight:400;letter-spacing:0.53px;-webkit-text-stroke:0.15px #5aa9f5;">CVE-2025-24813</div>
<svg class="a" style="left:345px;top:500px;" width="55" height="40" viewBox="0 0 55 40"><path d="M13.4 19.8 L27.2 11.6 L41 19.8" fill="none" stroke="#e0647a" stroke-width="6" stroke-linecap="round" stroke-linejoin="round"/><path d="M19.6 31 L27.1 25.6 L34.6 31" fill="none" stroke="#e0647a" stroke-width="6" stroke-linecap="round" stroke-linejoin="round"/></svg>
<div class="t" style="left:408.0px;top:508.7px;font-size:24px;color:#eceef2;font-weight:400;letter-spacing:0.66px;-webkit-text-stroke:0.15px #eceef2;">High</div>
<div class="t" style="left:553.0px;top:508.7px;font-size:24px;color:#e33a5e;font-weight:400;letter-spacing:2.15px;-webkit-text-stroke:0.35px #e33a5e;">98</div>
<div class="t" style="left:848.0px;top:508.7px;font-size:24px;color:#eceef2;font-weight:400;letter-spacing:-1.01px;-webkit-text-stroke:0.35px #eceef2;">8.1</div>
<div class="t" style="left:1167.0px;top:508.7px;font-size:24px;color:#eceef2;font-weight:400;letter-spacing:-0.41px;-webkit-text-stroke:0.35px #eceef2;">94.18%</div>
<div class="t" style="left:1489.0px;top:508.7px;font-size:24px;color:#eceef2;font-weight:400;letter-spacing:-1.08px;-webkit-text-stroke:0.35px #eceef2;">Yes</div>
<div class="t" style="left:1809.0px;top:508.7px;font-size:24px;color:#eceef2;font-weight:400;letter-spacing:-1.08px;-webkit-text-stroke:0.35px #eceef2;">Yes</div>
<div class="a" style="left:8px;top:560px;width:1836px;height:2px;background:#252c3a;"></div>
<div class="t" style="left:33.0px;top:588.7px;font-size:24px;color:#5aa9f5;font-weight:400;letter-spacing:0.53px;-webkit-text-stroke:0.15px #5aa9f5;">CVE-2020-26258</div>
<svg class="a" style="left:345px;top:580px;" width="55" height="40" viewBox="0 0 55 40"><path d="M13.4 19.8 L27.2 11.6 L41 19.8" fill="none" stroke="#e0647a" stroke-width="6" stroke-linecap="round" stroke-linejoin="round"/><path d="M19.6 31 L27.1 25.6 L34.6 31" fill="none" stroke="#e0647a" stroke-width="6" stroke-linecap="round" stroke-linejoin="round"/></svg>
<div class="t" style="left:408.0px;top:588.7px;font-size:24px;color:#eceef2;font-weight:400;letter-spacing:0.66px;-webkit-text-stroke:0.15px #eceef2;">High</div>
<div class="t" style="left:553.0px;top:588.7px;font-size:24px;color:#e33a5e;font-weight:400;letter-spacing:1.15px;-webkit-text-stroke:0.35px #e33a5e;">97</div>
<div class="t" style="left:848.0px;top:588.7px;font-size:24px;color:#eceef2;font-weight:400;letter-spacing:-1.01px;-webkit-text-stroke:0.35px #eceef2;">7.7</div>
<div class="t" style="left:1167.0px;top:588.7px;font-size:24px;color:#eceef2;font-weight:400;letter-spacing:-0.41px;-webkit-text-stroke:0.35px #eceef2;">93.68%</div>
<div class="t" style="left:1489.0px;top:588.7px;font-size:24px;color:#eceef2;font-weight:400;letter-spacing:-1.08px;-webkit-text-stroke:0.35px #eceef2;">Yes</div>
<div class="t" style="left:1809.0px;top:588.7px;font-size:24px;color:#eceef2;font-weight:400;letter-spacing:-1.08px;-webkit-text-stroke:0.35px #eceef2;">Yes</div>
<div class="a" style="left:8px;top:640px;width:1836px;height:2px;background:#252c3a;"></div>
<div class="t" style="left:33.0px;top:668.7px;font-size:24px;color:#5aa9f5;font-weight:400;letter-spacing:0.53px;-webkit-text-stroke:0.15px #5aa9f5;">CVE-2020-26258</div>
<svg class="a" style="left:345px;top:660px;" width="55" height="40" viewBox="0 0 55 40"><path d="M13.4 19.8 L27.2 11.6 L41 19.8" fill="none" stroke="#e0647a" stroke-width="6" stroke-linecap="round" stroke-linejoin="round"/><path d="M19.6 31 L27.1 25.6 L34.6 31" fill="none" stroke="#e0647a" stroke-width="6" stroke-linecap="round" stroke-linejoin="round"/></svg>
<div class="t" style="left:408.0px;top:668.7px;font-size:24px;color:#eceef2;font-weight:400;letter-spacing:0.66px;-webkit-text-stroke:0.15px #eceef2;">High</div>
<div class="t" style="left:553.0px;top:668.7px;font-size:24px;color:#e33a5e;font-weight:400;letter-spacing:1.15px;-webkit-text-stroke:0.35px #e33a5e;">97</div>
<div class="t" style="left:848.0px;top:668.7px;font-size:24px;color:#eceef2;font-weight:400;letter-spacing:-1.01px;-webkit-text-stroke:0.35px #eceef2;">7.7</div>
<div class="t" style="left:1167.0px;top:668.7px;font-size:24px;color:#eceef2;font-weight:400;letter-spacing:-0.41px;-webkit-text-stroke:0.35px #eceef2;">93.68%</div>
<div class="t" style="left:1489.0px;top:668.7px;font-size:24px;color:#eceef2;font-weight:400;letter-spacing:-1.08px;-webkit-text-stroke:0.35px #eceef2;">Yes</div>
<div class="t" style="left:1809.0px;top:668.7px;font-size:24px;color:#eceef2;font-weight:400;letter-spacing:-1.08px;-webkit-text-stroke:0.35px #eceef2;">Yes</div>
<div class="a" style="left:8px;top:720px;width:1836px;height:2px;background:#252c3a;"></div>
<div class="t" style="left:33.0px;top:748.7px;font-size:24px;color:#5aa9f5;font-weight:400;letter-spacing:0.53px;-webkit-text-stroke:0.15px #5aa9f5;">CVE-2023-50164</div>
<svg class="a" style="left:345px;top:740px;" width="55" height="40" viewBox="0 0 55 40"><path d="M13.4 19.8 L27.2 11.6 L41 19.8" fill="none" stroke="#dd313d" stroke-width="6" stroke-linecap="round" stroke-linejoin="round"/><path d="M19.6 31 L27.1 25.6 L34.6 31" fill="none" stroke="#dd313d" stroke-width="6" stroke-linecap="round" stroke-linejoin="round"/></svg>
<div class="t" style="left:408.0px;top:748.7px;font-size:24px;color:#eceef2;font-weight:400;letter-spacing:0.51px;-webkit-text-stroke:0.15px #eceef2;">Critical</div>
<div class="t" style="left:553.0px;top:748.7px;font-size:24px;color:#e33a5e;font-weight:400;letter-spacing:1.15px;-webkit-text-stroke:0.35px #e33a5e;">99</div>
<div class="t" style="left:848.0px;top:748.7px;font-size:24px;color:#eceef2;font-weight:400;letter-spacing:0.24px;-webkit-text-stroke:0.35px #eceef2;">9.8</div>
<div class="t" style="left:1167.0px;top:748.7px;font-size:24px;color:#eceef2;font-weight:400;letter-spacing:-0.41px;-webkit-text-stroke:0.35px #eceef2;">93.66%</div>
<div class="t" style="left:1489.0px;top:748.7px;font-size:24px;color:#eceef2;font-weight:400;letter-spacing:-1.08px;-webkit-text-stroke:0.35px #eceef2;">Yes</div>
<div class="t" style="left:1809.0px;top:748.7px;font-size:24px;color:#eceef2;font-weight:400;letter-spacing:-1.08px;-webkit-text-stroke:0.35px #eceef2;">Yes</div>
<div class="a" style="left:8px;top:800px;width:1836px;height:2px;background:#252c3a;"></div>
<div class="t" style="left:33.0px;top:828.7px;font-size:24px;color:#5aa9f5;font-weight:400;letter-spacing:0.53px;-webkit-text-stroke:0.15px #5aa9f5;">CVE-2023-50164</div>
<svg class="a" style="left:345px;top:820px;" width="55" height="40" viewBox="0 0 55 40"><path d="M13.4 19.8 L27.2 11.6 L41 19.8" fill="none" stroke="#dd313d" stroke-width="6" stroke-linecap="round" stroke-linejoin="round"/><path d="M19.6 31 L27.1 25.6 L34.6 31" fill="none" stroke="#dd313d" stroke-width="6" stroke-linecap="round" stroke-linejoin="round"/></svg>
<div class="t" style="left:408.0px;top:828.7px;font-size:24px;color:#eceef2;font-weight:400;letter-spacing:0.51px;-webkit-text-stroke:0.15px #eceef2;">Critical</div>
<div class="t" style="left:553.0px;top:828.7px;font-size:24px;color:#e33a5e;font-weight:400;letter-spacing:1.15px;-webkit-text-stroke:0.35px #e33a5e;">99</div>
<div class="t" style="left:848.0px;top:828.7px;font-size:24px;color:#eceef2;font-weight:400;letter-spacing:0.24px;-webkit-text-stroke:0.35px #eceef2;">9.8</div>
<div class="t" style="left:1167.0px;top:828.7px;font-size:24px;color:#eceef2;font-weight:400;letter-spacing:-0.41px;-webkit-text-stroke:0.35px #eceef2;">93.66%</div>
<div class="t" style="left:1489.0px;top:828.7px;font-size:24px;color:#eceef2;font-weight:400;letter-spacing:-1.08px;-webkit-text-stroke:0.35px #eceef2;">Yes</div>
<div class="t" style="left:1809.0px;top:828.7px;font-size:24px;color:#eceef2;font-weight:400;letter-spacing:-1.08px;-webkit-text-stroke:0.35px #eceef2;">Yes</div>
<div class="a" style="left:8px;top:880px;width:1836px;height:2px;background:#252c3a;"></div>
<div class="t" style="left:33.0px;top:908.7px;font-size:24px;color:#5aa9f5;font-weight:400;letter-spacing:0.53px;-webkit-text-stroke:0.15px #5aa9f5;">CVE-2023-50164</div>
<svg class="a" style="left:345px;top:900px;" width="55" height="40" viewBox="0 0 55 40"><path d="M13.4 19.8 L27.2 11.6 L41 19.8" fill="none" stroke="#dd313d" stroke-width="6" stroke-linecap="round" stroke-linejoin="round"/><path d="M19.6 31 L27.1 25.6 L34.6 31" fill="none" stroke="#dd313d" stroke-width="6" stroke-linecap="round" stroke-linejoin="round"/></svg>
<div class="t" style="left:408.0px;top:908.7px;font-size:24px;color:#eceef2;font-weight:400;letter-spacing:0.51px;-webkit-text-stroke:0.15px #eceef2;">Critical</div>
<div class="t" style="left:553.0px;top:908.7px;font-size:24px;color:#e33a5e;font-weight:400;letter-spacing:1.15px;-webkit-text-stroke:0.35px #e33a5e;">99</div>
<div class="t" style="left:848.0px;top:908.7px;font-size:24px;color:#eceef2;font-weight:400;letter-spacing:0.24px;-webkit-text-stroke:0.35px #eceef2;">9.8</div>
<div class="t" style="left:1167.0px;top:908.7px;font-size:24px;color:#eceef2;font-weight:400;letter-spacing:-0.41px;-webkit-text-stroke:0.35px #eceef2;">93.66%</div>
<div class="t" style="left:1489.0px;top:908.7px;font-size:24px;color:#eceef2;font-weight:400;letter-spacing:-1.08px;-webkit-text-stroke:0.35px #eceef2;">Yes</div>
<div class="t" style="left:1809.0px;top:908.7px;font-size:24px;color:#eceef2;font-weight:400;letter-spacing:-1.08px;-webkit-text-stroke:0.35px #eceef2;">Yes</div>
<div class="a" style="left:8px;top:960px;width:1836px;height:2px;background:#252c3a;"></div>
<div class="t" style="left:33.0px;top:988.7px;font-size:24px;color:#5aa9f5;font-weight:400;letter-spacing:0.53px;-webkit-text-stroke:0.15px #5aa9f5;">CVE-2024-53677</div>
<svg class="a" style="left:345px;top:980px;" width="55" height="40" viewBox="0 0 55 40"><path d="M13.4 19.8 L27.2 11.6 L41 19.8" fill="none" stroke="#dd313d" stroke-width="6" stroke-linecap="round" stroke-linejoin="round"/><path d="M19.6 31 L27.1 25.6 L34.6 31" fill="none" stroke="#dd313d" stroke-width="6" stroke-linecap="round" stroke-linejoin="round"/></svg>
<div class="t" style="left:408.0px;top:988.7px;font-size:24px;color:#eceef2;font-weight:400;letter-spacing:0.51px;-webkit-text-stroke:0.15px #eceef2;">Critical</div>
<div class="t" style="left:553.0px;top:988.7px;font-size:24px;color:#e33a5e;font-weight:400;letter-spacing:1.15px;-webkit-text-stroke:0.35px #e33a5e;">99</div>
<div class="t" style="left:848.0px;top:988.7px;font-size:24px;color:#eceef2;font-weight:400;letter-spacing:0.24px;-webkit-text-stroke:0.35px #eceef2;">9.8</div>
<div class="t" style="left:1167.0px;top:988.7px;font-size:24px;color:#eceef2;font-weight:400;letter-spacing:-0.41px;-webkit-text-stroke:0.35px #eceef2;">93.05%</div>
<div class="t" style="left:1489.0px;top:988.7px;font-size:24px;color:#eceef2;font-weight:400;letter-spacing:-1.08px;-webkit-text-stroke:0.35px #eceef2;">Yes</div>
<div class="a" style="left:8px;top:1040px;width:1836px;height:2px;background:#252c3a;"></div>
</div>
<svg class="a" style="left:1041px;top:929px;" width="12" height="21" viewBox="0 0 12 21"><rect x="0" y="0" width="4" height="4" fill="#8a8f98"/><rect x="0" y="8.5" width="4" height="4" fill="#8a8f98"/><rect x="0" y="17" width="4" height="4" fill="#8a8f98"/><rect x="8" y="0" width="4" height="4" fill="#8a8f98"/><rect x="8" y="8.5" width="4" height="4" fill="#8a8f98"/><rect x="8" y="17" width="4" height="4" fill="#8a8f98"/></svg>
<div class="a" style="left:2882px;top:1742px;width:70px;height:70px;background:#151515;border:5px solid #56b89a;border-radius:20px;box-sizing:border-box;box-shadow:inset 0 0 0 2px #1a2230;"></div>
<svg class="a" style="left:2882px;top:1742px;" width="70" height="70" viewBox="0 0 70 70"><defs><linearGradient id="hq" x1="0" y1="0" x2="0" y2="1"><stop offset="0" stop-color="#63cfa8"/><stop offset="1" stop-color="#2c7f66"/></linearGradient></defs><path d="M28.2 28.5 C28.2 23.5 31.5 22 35.2 22 C39.3 22 42.2 24.6 42.2 28.2 C42.2 31.6 39.6 33 37.6 34.4 C35.9 35.6 35.2 37 35.2 41" fill="none" stroke="url(#hq)" stroke-width="6" stroke-linecap="round"/><ellipse cx="35.2" cy="50.6" rx="3.8" ry="3.1" fill="#2c7f66"/></svg>
</div></body></html>
